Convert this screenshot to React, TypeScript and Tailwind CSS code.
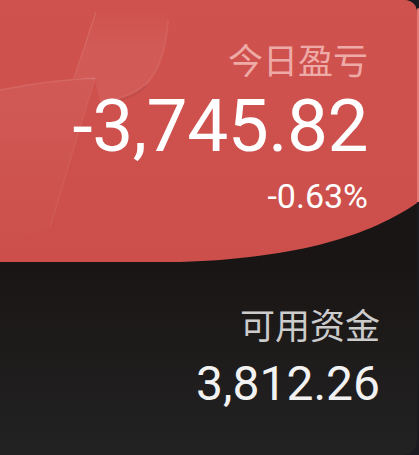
import React from "react";

export default function App() {
  return (
    <div className="w-[419px] h-[455px] bg-[#1b1a20] flex overflow-hidden">
      <div className="w-[417px] h-[455px] rounded-tr-[12px] rounded-br-[14px] overflow-hidden flex flex-col relative bg-[#1a1515]">
        <div className="relative h-[262px] shrink-0 bg-gradient-to-b from-[#d0524e] to-[#cc4f4b] [clip-path:path('M0_0H417V203C370_235_300_258_180_262H0Z')]">
          <svg className="absolute left-0 top-0" width="200" height="262" viewBox="0 0 200 262">
            <defs>
              <linearGradient id="fadeTop" x1="0" y1="0" x2="0" y2="1">
                <stop offset="0" stopColor="#ffffff" stopOpacity="0" />
                <stop offset="0.4" stopColor="#ffffff" stopOpacity="0.05" />
                <stop offset="1" stopColor="#ffffff" stopOpacity="0.06" />
              </linearGradient>
              <linearGradient id="fadeDown" x1="0" y1="0" x2="0" y2="1">
                <stop offset="0" stopColor="#ffffff" stopOpacity="0.05" />
                <stop offset="1" stopColor="#ffffff" stopOpacity="0" />
              </linearGradient>
            </defs>
            <path d="M96 10 L168 10 C166 45 162 68 146 84 C134 95 118 100 100 101 L95 80 L75 78 Z" fill="url(#fadeTop)" />
            <path d="M96 12 L74 78" stroke="#ffffff" strokeOpacity="0.14" strokeWidth="1" />
            <path d="M168 20 C166 45 162 68 146 84 C134 95 118 100 100 101" stroke="#ffffff" strokeOpacity="0.07" strokeWidth="2" fill="none" />
            <path d="M146 86 C134 97 118 102 100 103" stroke="#000000" strokeOpacity="0.05" strokeWidth="3" fill="none" />
            <path d="M0 90 C30 84 70 79 95 78 L50 227 L0 250 Z" fill="url(#fadeDown)" />
            <path d="M0 90 C30 84 70 79 95 78" stroke="#ffffff" strokeOpacity="0.1" strokeWidth="1.5" fill="none" />
            <path d="M95 78 L50 227" stroke="#ffffff" strokeOpacity="0.06" strokeWidth="1.5" />
          </svg>
          <div className="relative flex flex-col items-end pr-[49px] pt-[37px]">
            <div className="text-[35px] leading-[44px] text-[#eeaaa7] [font-family:'Noto_Sans_CJK_SC',sans-serif]">今日盈亏</div>
            <div className="mt-[9px] text-[73px] leading-[73px] text-white [font-family:Roboto,sans-serif] tracking-[-0.5px]">-3,745.82</div>
            <div className="mt-[15px] text-[34px] leading-[36px] text-white [font-family:Roboto,sans-serif]">-0.63%</div>
          </div>
        </div>
        <div className="flex-1 flex flex-col items-end pr-[37px] pt-[40px] bg-gradient-to-b from-[#1a1515] to-[#222222]">
          <div className="text-[35px] leading-[44px] text-[#cccccc] [font-family:'Noto_Sans_CJK_SC',sans-serif]">可用资金</div>
          <div className="mt-[13px] text-[48px] leading-[50px] text-[#f2f2f2] [font-family:Roboto,sans-serif]">3,812.26</div>
        </div>
      </div>
      <div className="w-[2px] pt-[8px]">
        <div className="h-[194px] bg-[#e07874] rounded-tl-[4px]" />
      </div>
    </div>
  );
}
